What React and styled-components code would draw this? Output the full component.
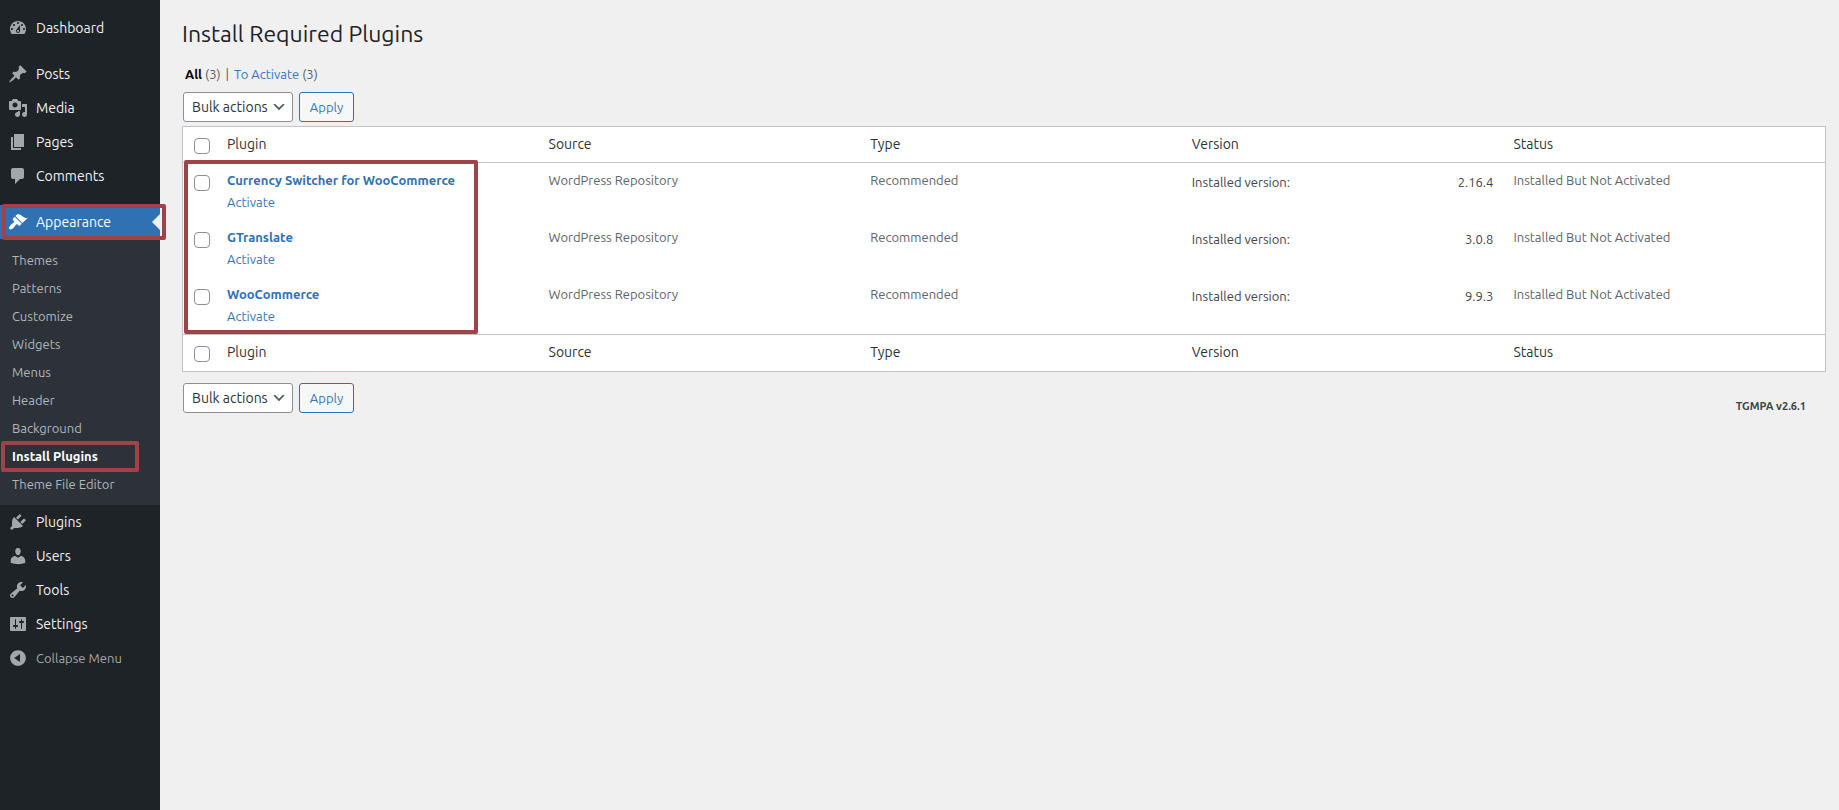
import React from 'react';
import styled, { createGlobalStyle, css } from 'styled-components';

const ICONS = {
    dashboard:
        'M3.76 16h12.48c1.1-1.37 1.76-3.11 1.76-5 0-4.42-3.58-8-8-8s-8 3.58-8 8c0 1.89.66 3.63 1.76 5zM10 4c.55 0 1 .45 1 1s-.45 1-1 1-1-.45-1-1 .45-1 1-1zM6 6c.55 0 1 .45 1 1s-.45 1-1 1-1-.45-1-1 .45-1 1-1zm8 0c.55 0 1 .45 1 1s-.45 1-1 1-1-.45-1-1 .45-1 1-1zm-5.37 5.55L12 7v6c0 1.1-.9 2-2 2s-2-.9-2-2c0-.57.24-1.08.63-1.45zM4 10c.55 0 1 .45 1 1s-.45 1-1 1-1-.45-1-1 .45-1 1-1zm12 0c.55 0 1 .45 1 1s-.45 1-1 1-1-.45-1-1 .45-1 1-1zm-5 3c0-.55-.45-1-1-1s-1 .45-1 1 .45 1 1 1 1-.45 1-1z',
    post: 'M10.44 3.02l1.82-1.82 6.36 6.35-1.83 1.82c-1.05-.68-2.48-.57-3.41.36l-.75.75c-.92.93-1.04 2.35-.35 3.41l-1.83 1.82-2.41-2.41-2.8 2.79c-.42.42-3.38 2.71-3.8 2.29s1.86-3.39 2.28-3.81l2.79-2.79L4.1 9.36l1.83-1.82c1.05.69 2.48.57 3.4-.36l.75-.75c.93-.92 1.05-2.35.36-3.41z',
    media: 'M13 11V4c0-.55-.45-1-1-1h-1.67L9 1H5L3.67 3H2c-.55 0-1 .45-1 1v7c0 .55.45 1 1 1h10c.55 0 1-.45 1-1zM7 4.5c1.38 0 2.5 1.12 2.5 2.5S8.38 9.5 7 9.5 4.5 8.38 4.5 7 5.62 4.5 7 4.5zM14 6h5v10.5c0 1.38-1.12 2.5-2.5 2.5S14 17.88 14 16.5s1.12-2.5 2.5-2.5c.17 0 .34.02.5.05V9h-3V6zm-4 8.05V13h2v3.5c0 1.38-1.12 2.5-2.5 2.5S7 17.88 7 16.5 8.12 14 9.5 14c.17 0 .34.02.5.05z',
    page: 'M6 15V2h10v13H6zm-1 1h8v2H3V5h2v11z',
    comments:
        'M5 2h9c1.1 0 2 .9 2 2v7c0 1.1-.9 2-2 2h-2l-5 5v-5H5c-1.1 0-2-.9-2-2V4c0-1.1.9-2 2-2z',
    appearance:
        'M14.48 11.06L7.41 3.99l1.5-1.5c.5-.56 2.3-.47 3.51.32 1.21.8 1.43 1.28 2.91 2.1 1.18.64 2.45 1.26 4.45.85zm-.71.71L6.7 4.7 4.93 6.47c-.39.39-.39 1.02 0 1.41l1.06 1.06c.39.39.39 1.03 0 1.42-.6.6-1.43 1.11-2.21 1.69-.35.26-.7.53-1.01.84C1.43 14.23.4 16.08 1.4 17.07c.99 1 2.84-.03 4.18-1.36.31-.31.58-.66.85-1.02.57-.78 1.08-1.61 1.69-2.21.39-.39 1.02-.39 1.41 0l1.06 1.06c.39.39 1.02.39 1.41 0z',
    plugins:
        'M13.11 4.36L9.87 7.6 8 5.73l3.24-3.24c.35-.34 1.05-.2 1.56.32.52.51.66 1.21.31 1.55zm-8 1.77l.91-1.12 9.01 9.01-1.19.84c-.71.71-2.63 1.16-3.82 1.16H6.14L4.9 17.26c-.59.59-1.54.59-2.12 0-.59-.58-.59-1.53 0-2.12l1.24-1.24v-3.88c0-1.13.4-3.19 1.09-3.89zm7.26 3.97l3.24-3.24c.34-.35 1.04-.21 1.55.31.52.51.66 1.21.31 1.55l-3.24 3.25z',
    users: 'M10 9.25c-2.27 0-2.73-3.44-2.73-3.44C7 4.02 7.82 2 9.97 2c2.16 0 2.98 2.02 2.71 3.81 0 0-.41 3.44-2.68 3.44zm0 2.57L12.72 10c2.39 0 4.52 2.33 4.52 4.53v2.49s-3.65 1.13-7.24 1.13c-3.65 0-7.24-1.13-7.24-1.13v-2.49c0-2.25 1.94-4.48 4.47-4.48z',
    tools: 'M16.68 9.77c-1.34 1.34-3.3 1.67-4.95.99l-5.41 6.52c-.99.99-2.59.99-3.58 0s-.99-2.59 0-3.57l6.52-5.42c-.68-1.65-.35-3.61.99-4.95 1.28-1.28 3.12-1.62 4.72-1.06l-2.89 2.89 2.82 2.82 2.86-2.87c.53 1.58.18 3.39-1.08 4.65zM3.81 16.21c.4.39 1.04.39 1.43 0 .4-.4.4-1.04 0-1.43-.39-.4-1.03-.4-1.43 0-.39.39-.39 1.03 0 1.43z',
    settings:
        'M18 16V4c0-.55-.45-1-1-1H3c-.55 0-1 .45-1 1v12c0 .55.45 1 1 1h14c.55 0 1-.45 1-1zM8 11h1c.55 0 1 .45 1 1s-.45 1-1 1H8v1.5c0 .28-.22.5-.5.5s-.5-.22-.5-.5V13H6c-.55 0-1-.45-1-1s.45-1 1-1h1V5.5c0-.28.22-.5.5-.5s.5.22.5.5V11zm5-2h-1c-.55 0-1-.45-1-1s.45-1 1-1h1V5.5c0-.28.22-.5.5-.5s.5.22.5.5V7h1c.55 0 1 .45 1 1s-.45 1-1 1h-1v5.5c0 .28-.22.5-.5.5s-.5-.22-.5-.5V9z',
    collapse:
        'M10 2.16c4.33 0 7.84 3.51 7.84 7.84s-3.51 7.84-7.84 7.84S2.16 14.33 2.16 10 5.71 2.16 10 2.16zm2 11.72V6.12L6.18 9.97z',
};

const CONTENT_MENU = [
    { icon: 'post', label: 'Posts' },
    { icon: 'media', label: 'Media' },
    { icon: 'page', label: 'Pages' },
    { icon: 'comments', label: 'Comments' },
];

const APPEARANCE_MENU = [
    'Themes',
    'Patterns',
    'Customize',
    'Widgets',
    'Menus',
    'Header',
    'Background',
    'Install Plugins',
    'Theme File Editor',
];

const ADMIN_MENU = [
    { icon: 'plugins', label: 'Plugins' },
    { icon: 'users', label: 'Users' },
    { icon: 'tools', label: 'Tools' },
    { icon: 'settings', label: 'Settings' },
];

const COLUMNS = ['Plugin', 'Source', 'Type', 'Version', 'Status'];

const PLUGINS = [
    { name: 'Currency Switcher for WooCommerce', version: '2.16.4' },
    { name: 'GTranslate', version: '3.0.8' },
    { name: 'WooCommerce', version: '9.9.3' },
];

function Icon({ name }) {
    return (
        <MenuIcon viewBox="0 0 20 20" aria-hidden="true">
            <path fillRule="evenodd" d={ICONS[name]} />
        </MenuIcon>
    );
}

function MenuItem({ icon, label }) {
    return (
        <li>
            <MenuLink href="#">
                <Icon name={icon} />
                {label}
            </MenuLink>
        </li>
    );
}

function Sidebar() {
    return (
        <SidebarNav aria-label="Main menu">
            <MenuList>
                <MenuItem icon="dashboard" label="Dashboard" />
                <Separator role="presentation" />
                {CONTENT_MENU.map((item) => (
                    <MenuItem key={item.label} {...item} />
                ))}
                <Separator role="presentation" />
                <li>
                    <MenuLink href="#" $current>
                        <Icon name="appearance" />
                        Appearance
                    </MenuLink>
                    <SubMenu>
                        {APPEARANCE_MENU.map((label) => (
                            <li key={label}>
                                <SubLink
                                    href="#"
                                    $current={label === 'Install Plugins'}
                                >
                                    {label}
                                </SubLink>
                            </li>
                        ))}
                    </SubMenu>
                </li>
                {ADMIN_MENU.map((item) => (
                    <MenuItem key={item.label} {...item} />
                ))}
                <li>
                    <CollapseButton type="button">
                        <Icon name="collapse" />
                        Collapse Menu
                    </CollapseButton>
                </li>
            </MenuList>
        </SidebarNav>
    );
}

function BulkActions({ id }) {
    return (
        <Actions>
            <SelectBox>
                <Select id={id} aria-label="Select bulk action">
                    <option>Bulk actions</option>
                    <option>Activate</option>
                </Select>
                <Chevron viewBox="0 0 20 20" aria-hidden="true">
                    <path d="M5 6l5 5 5-5 2 1-7 7-7-7 2-1z" />
                </Chevron>
            </SelectBox>
            <ApplyButton type="button">Apply</ApplyButton>
        </Actions>
    );
}

function HeadingRow() {
    return (
        <tr>
            <CheckHeading>
                <Checkbox type="checkbox" aria-label="Select all" />
            </CheckHeading>
            {COLUMNS.map((column) => (
                <Heading key={column} scope="col">
                    {column}
                </Heading>
            ))}
        </tr>
    );
}

function PluginTable() {
    return (
        <TableWrap>
            <Table>
                <thead>
                    <HeadingRow />
                </thead>
                <tbody>
                    {PLUGINS.map(({ name, version }) => (
                        <tr key={name}>
                            <CheckCell>
                                <Checkbox
                                    type="checkbox"
                                    aria-label={`Select ${name}`}
                                />
                            </CheckCell>
                            <Cell>
                                <PluginName>{name}</PluginName>
                                <RowAction href="#">Activate</RowAction>
                            </Cell>
                            <Cell>WordPress Repository</Cell>
                            <Cell>Recommended</Cell>
                            <Cell>
                                <Version>
                                    <span>Installed version:</span>
                                    <span>{version}</span>
                                </Version>
                            </Cell>
                            <Cell>Installed But Not Activated</Cell>
                        </tr>
                    ))}
                </tbody>
                <tfoot>
                    <HeadingRow />
                </tfoot>
            </Table>
            <Marker />
        </TableWrap>
    );
}

function App() {
    return (
        <Page>
            <GlobalStyle />
            <Sidebar />
            <Main>
                <Title>Install Required Plugins</Title>
                <Filters>
                    <AllLink href="#">All</AllLink>
                    <span>(3)</span>
                    <Divider>|</Divider>
                    <FilterLink href="#">To Activate</FilterLink>
                    <span>(3)</span>
                </Filters>
                <BulkActions id="bulk-top" />
                <PluginTable />
                <Footer>
                    <BulkActions id="bulk-bottom" />
                    <Credit>TGMPA v2.6.1</Credit>
                </Footer>
            </Main>
        </Page>
    );
}

export default App;

const GlobalStyle = createGlobalStyle`
    * {
        box-sizing: border-box;
    }
    body {
        margin: 0;
        background: #f0f0f0;
        color: #3c434a;
        font-family: Ubuntu, 'Noto Sans', sans-serif;
        font-size: 13px;
        line-height: 20px;
    }
    button,
    select {
        font-family: inherit;
    }
    a {
        text-decoration: none;
    }
`;
const redFrame = css`
    content: '';
    position: absolute;
    border: 4px solid #a04348;
    border-radius: 2px;
    pointer-events: none;
`;
const Page = styled.div`
    display: flex;
    min-height: 100vh;
`;
const SidebarNav = styled.nav`
    flex: 0 0 160px;
    background: #1e2327;
`;
const MenuList = styled.ul`
    margin: 0;
    padding: 11px 0 0;
    list-style: none;
`;
const Separator = styled.li`
    height: 12px;
`;
const MenuIcon = styled.svg`
    width: 20px;
    height: 20px;
    fill: #a2a7ab;
`;
const menuRow = css`
    display: flex;
    align-items: center;
    gap: 8px;
    width: 100%;
    height: 34px;
    padding: 0 8px;
    font-size: 14px;
    line-height: 18px;
`;
const MenuLink = styled.a`
    ${menuRow}
    color: #f0f0f1;
    ${({ $current }) =>
        $current &&
        css`
            position: relative;
            background: #3071b3;
            color: #fff;
            ${MenuIcon} {
                fill: #fff;
            }
            &::before {
                content: '';
                position: absolute;
                top: 9px;
                right: 0;
                border: 8px solid transparent;
                border-right-color: #f0f0f0;
                border-left-width: 0;
            }
            &::after {
                ${redFrame}
                inset: -1px -6px -1px 2px;
            }
        `}
`;
const CollapseButton = styled.button`
    ${menuRow}
    border: 0;
    background: none;
    color: #a2a7ab;
    font-size: 13px;
    cursor: pointer;
`;
const SubMenu = styled.ul`
    margin: 0;
    padding: 7px 0;
    background: #2c3238;
    list-style: none;
`;
const SubLink = styled.a`
    display: block;
    padding: 4px 12px;
    color: #b0b6bb;
    ${({ $current }) =>
        $current &&
        css`
            position: relative;
            color: #fff;
            font-weight: 600;
            &::after {
                ${redFrame}
                inset: -1px 21px -2px 1px;
            }
        `}
`;
const Main = styled.main`
    flex: 1;
    min-width: 0;
    padding: 18px 13px 24px 22px;
`;
const Title = styled.h1`
    margin: 0;
    color: #1d2327;
    font-size: 23px;
    font-weight: 400;
    line-height: 32px;
`;
const Filters = styled.div`
    display: flex;
    gap: 3px;
    padding: 14px 3px 8px;
    color: #50575e;
`;
const AllLink = styled.a`
    color: #000;
    font-weight: 600;
`;
const FilterLink = styled.a`
    color: #3578b8;
`;
const Divider = styled.span`
    margin: 0 2px;
`;
const Actions = styled.div`
    display: flex;
    gap: 6px;
    padding-left: 1px;
`;
const SelectBox = styled.div`
    position: relative;
`;
const Select = styled.select`
    appearance: none;
    width: 110px;
    height: 30px;
    padding: 0 24px 0 8px;
    border: 1px solid #8c8f94;
    border-radius: 3px;
    background: #fff;
    color: #2c3338;
    font-size: 14px;
`;
const Chevron = styled.svg`
    position: absolute;
    top: 7px;
    right: 6px;
    width: 16px;
    height: 16px;
    fill: #50575e;
    pointer-events: none;
`;
const ApplyButton = styled.button`
    width: 55px;
    height: 30px;
    padding: 0;
    border: 1px solid #3071b3;
    border-radius: 3px;
    background: #f6f7f7;
    color: #3578b8;
    font-size: 13px;
    cursor: pointer;
`;
const TableWrap = styled.div`
    position: relative;
    margin-top: 4px;
`;
const Marker = styled.span`
    ${redFrame}
    top: 34px;
    left: 2px;
    width: 294px;
    height: 174px;
`;
const Table = styled.table`
    width: 100%;
    table-layout: fixed;
    border: 1px solid #c3c4c7;
    border-spacing: 0;
    background: #fff;
    thead th {
        border-bottom: 1px solid #c3c4c7;
    }
    tfoot th {
        border-top: 1px solid #c3c4c7;
        padding-bottom: 9px;
    }
`;
const Heading = styled.th`
    padding: 7px 10px 8px;
    color: #2c3338;
    font-size: 14px;
    font-weight: 400;
    text-align: left;
    vertical-align: top;
`;
const CheckHeading = styled.th`
    width: 34px;
    padding: 11px 0 0 11px;
    text-align: left;
    vertical-align: top;
`;
const Cell = styled.td`
    height: 57px;
    padding: 7px 10px 8px;
    color: #5d646b;
    vertical-align: top;
`;
const CheckCell = styled.td`
    padding: 12px 0 0 11px;
    vertical-align: top;
`;
const Checkbox = styled.input`
    appearance: none;
    display: block;
    width: 16px;
    height: 16px;
    margin: 0;
    border: 1px solid #8c8f94;
    border-radius: 4px;
    background: #fff;
`;
const PluginName = styled.strong`
    display: block;
    color: #3071b3;
    font-weight: 600;
    white-space: nowrap;
`;
const RowAction = styled.a`
    display: inline-block;
    margin-top: 2px;
    color: #3578b8;
`;
const Version = styled.div`
    display: flex;
    justify-content: space-between;
    padding-top: 2px;
    color: #3c434a;
`;
const Footer = styled.div`
    display: flex;
    justify-content: space-between;
    padding: 11px 20px 0 0;
`;
const Credit = styled.strong`
    margin-top: 13px;
    font-size: 11px;
    font-weight: 600;
`;
